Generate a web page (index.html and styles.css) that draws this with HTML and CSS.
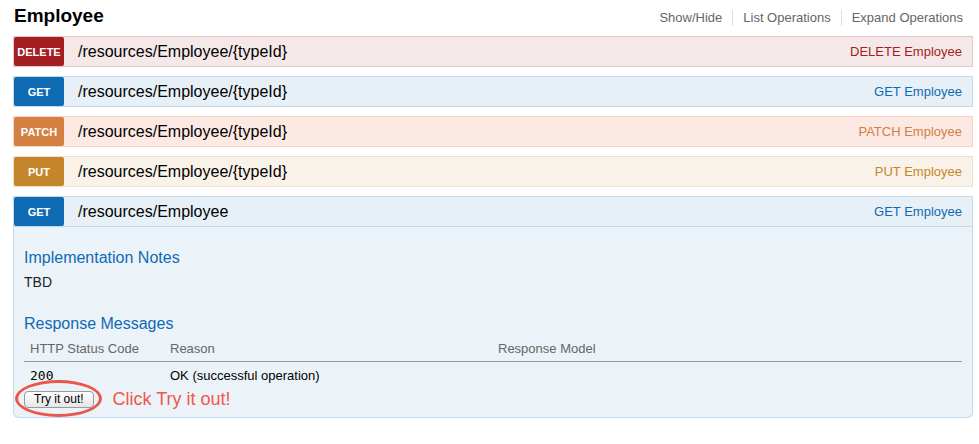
FILE: index.html
```html
<!DOCTYPE html>
<html>
<head>
<meta charset="utf-8">
<link rel="stylesheet" href="styles.css">
</head>
<body>
<div class="resource">
  <div class="res-head">
    <h2 class="res-title">Employee</h2>
    <ul class="res-links">
      <li>Show/Hide</li>
      <li>List Operations</li>
      <li class="last">Expand Operations</li>
    </ul>
  </div>
  <ul class="ops">
    <li class="op op-delete">
      <div class="op-head"><span class="badge">DELETE</span><span class="path">/resources/Employee/{typeId}</span><span class="summary">DELETE Employee</span></div>
    </li>
    <li class="op op-get">
      <div class="op-head"><span class="badge">GET</span><span class="path">/resources/Employee/{typeId}</span><span class="summary">GET Employee</span></div>
    </li>
    <li class="op op-patch">
      <div class="op-head"><span class="badge">PATCH</span><span class="path">/resources/Employee/{typeId}</span><span class="summary">PATCH Employee</span></div>
    </li>
    <li class="op op-put">
      <div class="op-head"><span class="badge">PUT</span><span class="path">/resources/Employee/{typeId}</span><span class="summary">PUT Employee</span></div>
    </li>
    <li class="op op-get open">
      <div class="op-head"><span class="badge">GET</span><span class="path">/resources/Employee</span><span class="summary">GET Employee</span></div>
      <div class="op-content">
        <h4 class="sec-title first">Implementation Notes</h4>
        <p class="notes">TBD</p>
        <h4 class="sec-title second">Response Messages</h4>
        <table class="resp">
          <colgroup><col class="c1"><col class="c2"><col></colgroup>
          <thead>
            <tr><th>HTTP Status Code</th><th>Reason</th><th>Response Model</th></tr>
          </thead>
          <tbody>
            <tr><td class="code">200</td><td>OK (successful operation)</td><td></td></tr>
          </tbody>
        </table>
        <div class="try-row">
          <span class="btn-wrap"><button class="try-btn">Try it out!</button><span class="ring"></span></span>
          <span class="hint">Click Try it out!</span>
        </div>
      </div>
    </li>
  </ul>
</div>
</body>
</html>
```

FILE: styles.css
```css
html, body {
  margin: 0;
  padding: 0;
  background: #fff;
  font-family: "Liberation Sans", Arial, sans-serif;
}

.resource {
  margin-left: 13px;
  width: 960px;
}

.res-head {
  display: flex;
  justify-content: space-between;
  align-items: flex-start;
  height: 36px;
}

.res-title {
  margin: 0;
  padding: 5px 0 0 1px;
  font-size: 19px;
  line-height: 22px;
  font-weight: bold;
  color: #000;
}

.res-links {
  list-style: none;
  margin: 0;
  padding: 10px 0 0 0;
  display: flex;
}

.res-links li {
  font-size: 13px;
  line-height: 16px;
  color: #666;
  padding: 0 10px;
  border-right: 1px solid #ddd;
}

.res-links li.last {
  border-right: none;
}

.ops {
  list-style: none;
  margin: 0;
  padding: 0;
}

.op {
  margin-bottom: 9px;
}

.op-head {
  display: flex;
  align-items: center;
  height: 29px;
  border: 1px solid;
}

.badge {
  width: 50px;
  height: 29px;
  line-height: 30px;
  text-align: center;
  color: #fff;
  font-size: 11px;
  font-weight: bold;
  border-radius: 2px;
  flex: none;
}

.path {
  margin-left: 14px;
  font-size: 16px;
  color: #000;
  flex: 1;
}

.summary {
  font-size: 13px;
  padding-right: 10px;
}

.op-delete .op-head { background: #f5e8e8; border-color: #e8c6c7; }
.op-delete .badge { background: #a41e22; }
.op-delete .summary { color: #a41e22; }

.op-get .op-head { background: #e7f0f7; border-color: #c3d9ec; }
.op-get .badge { background: #0f6ab4; }
.op-get .summary { color: #0f6ab4; }

.op-patch .op-head { background: #fce9e3; border-color: #f5d5c3; }
.op-patch .badge { background: #d38042; }
.op-patch .summary { color: #d38042; }

.op-put .op-head { background: #f9f2e9; border-color: #f0e0ca; }
.op-put .badge { background: #c5862b; }
.op-put .summary { color: #c5862b; }

.op-content {
  background: #ebf3f9;
  border: 1px solid #c3d9ec;
  border-top: none;
  border-radius: 0 0 6px 6px;
  padding: 10px 10px 9px 10px;
}

.sec-title {
  margin: 0;
  font-size: 16px;
  line-height: 20px;
  font-weight: normal;
  color: #0f6ab4;
}

.sec-title.first { margin-top: 11px; }
.sec-title.second { margin-top: 23px; }

.notes {
  margin: 5px 0 0 0;
  font-size: 14px;
  line-height: 18px;
  color: #222;
}

.resp {
  margin-top: 7px;
  width: 100%;
  border-collapse: collapse;
  table-layout: fixed;
  font-size: 13px;
}

.resp col.c1 { width: 140px; }
.resp col.c2 { width: 328px; }

.resp th {
  text-align: left;
  font-weight: normal;
  color: #666;
  line-height: 16px;
  padding: 0 0 4px 6px;
  border-bottom: 1px solid #999;
}

.resp td {
  line-height: 16px;
  padding: 6px 0 0 6px;
  color: #000;
}

.resp td.code {
  font-family: "DejaVu Sans Mono", "Liberation Mono", monospace;
  font-size: 13px;
}

.try-row {
  margin-top: 7px;
  display: flex;
  align-items: center;
  height: 17px;
}

.btn-wrap {
  position: relative;
  display: inline-block;
  height: 17px;
}

.try-btn {
  display: block;
  height: 17px;
  margin: 0;
  padding: 0 9px;
  font-family: "Liberation Sans", Arial, sans-serif;
  font-size: 12px;
  line-height: 15px;
  color: #000;
  background: linear-gradient(#ffffff, #e6e6e6);
  border: 1px solid #9a9a9a;
  border-radius: 4px;
}

.ring {
  position: absolute;
  left: -9px;
  top: -11px;
  width: 81px;
  height: 31px;
  border: 3px solid #e9574a;
  border-radius: 50%;
}

.hint {
  margin-left: 19px;
  font-size: 18px;
  line-height: 17px;
  color: #f0574a;
}
```
